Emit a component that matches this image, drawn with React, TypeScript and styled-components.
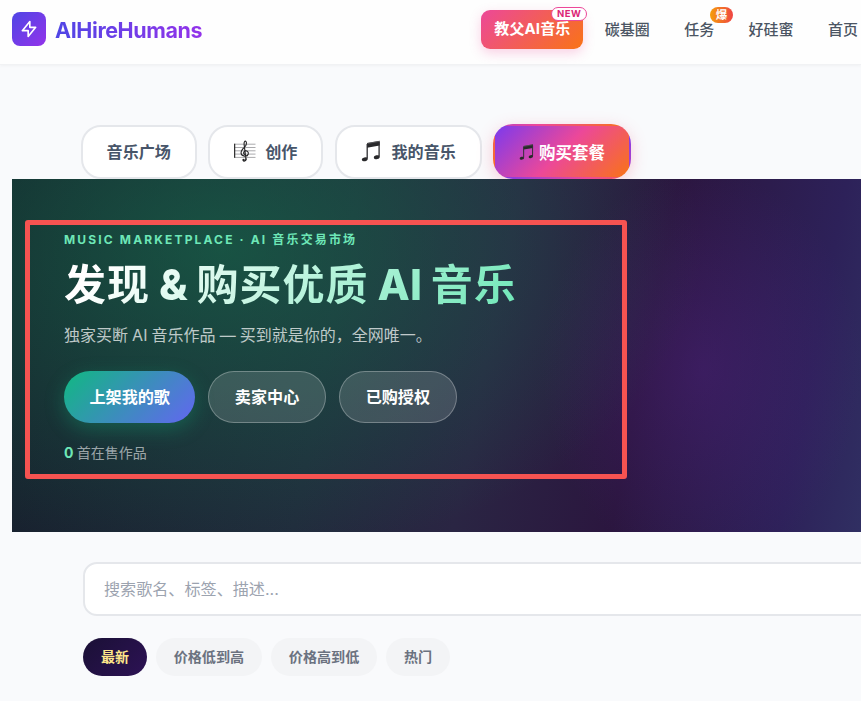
import React from "react";
import styled, { createGlobalStyle, css } from "styled-components";

type IconProps = {
  width: number;
  height: number;
};

const BoltIcon: React.FC = () => (
  <svg width="20" height="20" viewBox="0 0 24 24" fill="none">
    <path
      d="M13 10V3L4 14h7v7l9-11h-7z"
      stroke="white"
      strokeWidth="2"
      strokeLinecap="round"
      strokeLinejoin="round"
    />
  </svg>
);

const ScoreIcon: React.FC<IconProps> = ({ width, height }) => (
  <svg width={width} height={height} viewBox="0 0 24 24" fill="none">
    <path
      d="M0 5.2H21.5M0 8.5H21.5M0 11.8H21.5M0 15.1H21.5M0 18.4H21.5"
      stroke="#85858a"
      strokeWidth="0.7"
    />
    <path d="M0.6 4.8V18.8" stroke="#333" strokeWidth="1.3" />
    <path
      d="M12 20.4L10.1 5.4C9.8 3 10.9 1.8 11.7 2.2C13.1 3 12.5 6.3 10.5 8.2C8.2 10.4 6.7 12 7.1 14.4C7.6 17.5 13.4 18.3 14.3 15C15 12.1 11.3 10.9 10 12.8C9.2 14.1 9.8 15.1 10.7 15.5"
      stroke="#252527"
      strokeWidth="1.1"
      strokeLinecap="round"
    />
    <path
      d="M12 20C12 22.2 9.6 22.5 9.2 21.2"
      stroke="#252527"
      strokeWidth="1.3"
      strokeLinecap="round"
    />
    <circle cx="9.6" cy="20.8" r="1.1" fill="#252527" />
  </svg>
);

const NoteIcon: React.FC<IconProps> = ({ width, height }) => (
  <svg width={width} height={height} viewBox="0 0 20 24">
    <path d="M6 4L18.7 1.8V6.6L6 8.8Z" fill="#29292b" />
    <path d="M6.2 5V19.4M18.1 3V17.4" stroke="#303033" strokeWidth="1.3" />
    <path d="M6.4 4.5L18.2 2.4" stroke="#68686c" strokeWidth="0.7" />
    <ellipse
      cx="3.8"
      cy="20.3"
      rx="3"
      ry="1.9"
      transform="rotate(-15 3.8 20.3)"
      fill="#29292b"
    />
    <ellipse
      cx="15.8"
      cy="18.2"
      rx="3"
      ry="1.9"
      transform="rotate(-15 15.8 18.2)"
      fill="#29292b"
    />
  </svg>
);

const SORTS = ["最新", "价格低到高", "价格高到低", "热门"];

const App: React.FC = () => {
  return (
    <Page>
      <GlobalStyle />
      <Header>
        <Brand>
          <LogoBox>
            <BoltIcon />
          </LogoBox>
          <BrandName>AIHireHumans</BrandName>
        </Brand>
        <Nav>
          <FeaturedLink>
            教父AI音乐
            <NewBadge>NEW</NewBadge>
          </FeaturedLink>
          <NavLink>碳基圈</NavLink>
          <NavLink>
            任务
            <HotBadge>爆</HotBadge>
          </NavLink>
          <NavLink>好硅蜜</NavLink>
          <NavLink>首页</NavLink>
        </Nav>
      </Header>
      <Tabs>
        <Tab>音乐广场</Tab>
        <Tab>
          <ScoreIcon width={24} height={24} />
          创作
        </Tab>
        <Tab>
          <TabNote>
            <NoteIcon width={20} height={24} />
          </TabNote>
          我的音乐
        </Tab>
        <BuyTab>
          <NoteIcon width={15} height={18} />
          购买套餐
        </BuyTab>
      </Tabs>
      <Hero>
        <Eyebrow>MUSIC MARKETPLACE · AI 音乐交易市场</Eyebrow>
        <Title>
          发现 <b>&amp;</b> 购买优质 <b>AI</b> 音乐
        </Title>
        <Subtitle>独家买断 AI 音乐作品 — 买到就是你的，全网唯一。</Subtitle>
        <Actions>
          <Button $primary>上架我的歌</Button>
          <Button>卖家中心</Button>
          <Button>已购授权</Button>
        </Actions>
        <Stats>
          <strong>0</strong> 首在售作品
        </Stats>
        <Highlight />
      </Hero>
      <Filters>
        <Search placeholder="搜索歌名、标签、描述..." />
        <Sorts>
          {SORTS.map((label, index) => (
            <Sort key={label} $active={index === 0}>
              {label}
            </Sort>
          ))}
        </Sorts>
      </Filters>
    </Page>
  );
};

const GlobalStyle = createGlobalStyle`
  * {
    box-sizing: border-box;
  }
  body {
    margin: 0;
    overflow: hidden;
    background: #f9fafc;
    font-family: Inter, "Noto Sans CJK SC", sans-serif;
  }
  button,
  input {
    font-family: inherit;
  }
`;

const Page = styled.div`
  width: 100%;
  height: 701px;
  overflow: hidden;
`;
const Header = styled.header`
  height: 65px;
  display: flex;
  justify-content: space-between;
  padding: 0 3px 0 12px;
  background: #fefefe;
  border-bottom: 1px solid #f1f2f4;
  box-shadow: 0 1px 3px rgba(0, 0, 0, 0.04);
`;
const Brand = styled.div`
  display: flex;
  align-items: center;
  gap: 9px;
  height: 58px;
`;
const LogoBox = styled.div`
  width: 34px;
  height: 34px;
  display: flex;
  align-items: center;
  justify-content: center;
  border-radius: 8px;
  background: linear-gradient(135deg, #4f46e5, #9333ea);
`;
const BrandName = styled.div`
  padding-top: 1px;
  font-size: 21.5px;
  font-weight: 700;
  letter-spacing: -0.4px;
  color: transparent;
  background: linear-gradient(90deg, #4f46e5, #9333ea);
  background-clip: text;
`;
const Nav = styled.nav`
  display: flex;
  align-items: center;
  height: 59px;
`;
const NavLink = styled.a`
  position: relative;
  margin-left: 34.4px;
  font-size: 15px;
  line-height: 22px;
  font-weight: 500;
  white-space: nowrap;
  color: #4b5563;
`;
const FeaturedLink = styled(NavLink)`
  height: 39px;
  margin: 0 -13px 0 0;
  padding: 8px 13px;
  border-radius: 9px;
  font-weight: 700;
  letter-spacing: 0.1px;
  color: white;
  background: linear-gradient(135deg, #ec4899, #f97316);
  box-shadow: 0 4px 12px rgba(236, 72, 153, 0.25);
`;
const NewBadge = styled.span`
  position: absolute;
  top: -3px;
  right: -4px;
  padding: 0 5px;
  border: 1px solid #ec4899;
  border-radius: 8px;
  font-size: 9.5px;
  line-height: 11.5px;
  font-weight: 700;
  letter-spacing: 0.5px;
  color: #db2777;
  background: white;
`;
const HotBadge = styled.span`
  position: absolute;
  top: -12px;
  right: -19px;
  padding: 0 6px;
  border-radius: 8px;
  font-size: 11.5px;
  line-height: 16px;
  font-weight: 700;
  color: white;
  background: linear-gradient(90deg, #f59e0b, #ef4444);
`;
const Tabs = styled.div`
  display: flex;
  gap: 11.2px;
  padding: 60px 0 0 80.6px;
`;
const Tab = styled.button`
  height: 54px;
  flex: none;
  display: flex;
  align-items: center;
  gap: 7px;
  padding: 0 24px 2px;
  border: 2px solid #e5e7eb;
  border-radius: 20px;
  font-size: 16.1px;
  font-weight: 600;
  color: #475569;
  background: white;
`;
const TabNote = styled.span`
  display: flex;
  width: 24px;
`;
const BuyTab = styled(Tab)`
  height: 55px;
  margin-top: -1px;
  padding-bottom: 0;
  gap: 5px;
  border-color: transparent;
  font-size: 16.5px;
  font-weight: 700;
  color: white;
  background: linear-gradient(135deg, #7c3aed, #ec4899 50%, #f97316);
  box-shadow: 0 4px 16px rgba(244, 85, 120, 0.28);
`;
const Hero = styled.section`
  position: relative;
  width: 1240px;
  height: 353px;
  margin-left: 12px;
  padding: 52px 52px 0;
  background:
    radial-gradient(
      ellipse 480px 310px at 210px 70px,
      rgba(20, 120, 78, 0.54),
      rgba(20, 120, 78, 0.22) 60%,
      transparent
    ),
    radial-gradient(
      ellipse 160px 200px at 690px 190px,
      rgba(88, 35, 140, 0.35),
      transparent
    ),
    linear-gradient(
      101deg,
      #16202c 0,
      #212a3c 343px,
      #2a2543 500px,
      #2b163f 655px,
      #2d2159 820px,
      #302f62 900px
    );
`;
const Eyebrow = styled.div`
  font-size: 12px;
  line-height: 18px;
  font-weight: 700;
  letter-spacing: 2.15px;
  color: #6ee7b7;
`;
const Title = styled.h1`
  width: fit-content;
  margin: 9px 0 0;
  font-size: 42px;
  line-height: 54px;
  font-weight: 700;
  letter-spacing: 1px;
  word-spacing: -2px;
  color: transparent;
  background: linear-gradient(135deg, #fff 0, #fff 10%, #6ee7b7);
  background-clip: text;
  b {
    font-weight: 800;
    letter-spacing: 0;
  }
`;
const Subtitle = styled.p`
  margin: 11px 0 0;
  font-size: 16px;
  line-height: 24px;
  word-spacing: -0.4px;
  color: rgba(255, 255, 255, 0.72);
`;
const Actions = styled.div`
  display: flex;
  gap: 12.4px;
  margin-top: 24px;
`;
const Button = styled.button<{ $primary?: boolean }>`
  height: 52px;
  padding: 0 26px 2px;
  border: 1px solid rgba(255, 255, 255, 0.28);
  border-radius: 26px;
  font-size: 16.1px;
  font-weight: 700;
  color: white;
  background: rgba(255, 255, 255, 0.14);
  ${({ $primary }) =>
    $primary &&
    css`
      padding: 0 25.5px 2px;
      border: none;
      background: linear-gradient(135deg, #10b981, #6366f1);
      box-shadow: 0 6px 20px rgba(16, 185, 129, 0.3);
    `}
`;
const Stats = styled.div`
  margin-top: 20px;
  font-size: 14px;
  line-height: 20px;
  word-spacing: -0.6px;
  color: rgba(255, 255, 255, 0.58);
  strong {
    color: #6ee7b7;
  }
`;
const Highlight = styled.div`
  position: absolute;
  top: 41px;
  left: 13px;
  width: 602px;
  height: 259px;
  border: 5px solid #f65351;
  border-radius: 3px;
`;
const Filters = styled.div`
  padding: 30px 0 0 83px;
`;
const Search = styled.input`
  display: block;
  width: 1080px;
  height: 54px;
  padding: 0 19px;
  border: 2px solid #e5e7eb;
  border-radius: 14px;
  font-size: 16.1px;
  background: white;
  &::placeholder {
    color: #9ca3af;
  }
`;
const Sorts = styled.div`
  display: flex;
  gap: 8.7px;
  margin-top: 22px;
`;
const Sort = styled.button<{ $active: boolean }>`
  height: 38px;
  padding: 0 18px 2px;
  border: none;
  border-radius: 19px;
  font-size: ${({ $active }) => ($active ? "14px" : "14.1px")};
  font-weight: 600;
  color: ${({ $active }) => ($active ? "#fde68a" : "#6b7280")};
  background: ${({ $active }) =>
    $active ? "linear-gradient(135deg, #1a1035, #2d1255)" : "#f3f4f6"};
`;
export default App;
